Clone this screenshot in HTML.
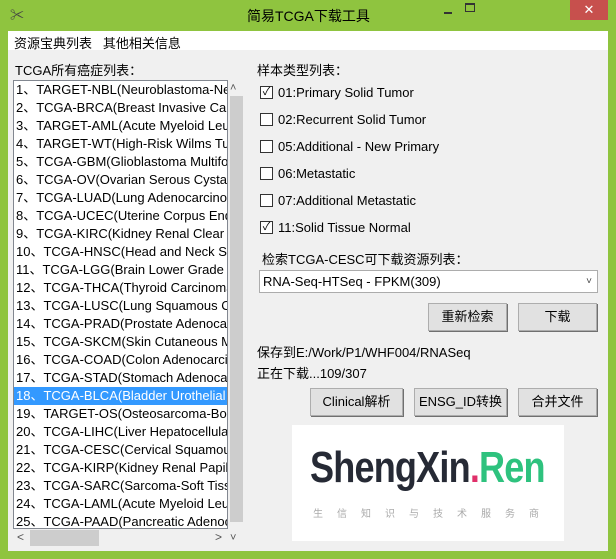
<!DOCTYPE html>
<html><head><meta charset="utf-8"><style>
*{margin:0;padding:0;box-sizing:border-box}
body{width:616px;height:559px;background:#8fc43f;position:relative;overflow:hidden;font-family:"Liberation Sans","Noto Sans CJK SC",sans-serif;font-size:13px;color:#000}
.a{position:absolute;white-space:nowrap}
.client{position:absolute;left:8px;top:31px;width:600px;height:520px;background:#f0f0f0}
.menu{position:absolute;left:8px;top:31px;width:600px;height:19px;background:#fff}
.list{position:absolute;left:13px;top:80px;width:215px;height:449px;background:#fff;border:1px solid #828790;overflow:hidden}
.list div{height:18px;line-height:18px;padding-left:2px;font-size:13px;white-space:nowrap}
.sel{background:#3399ff;color:#fff}
.cb{position:absolute;width:13px;height:13px;border:1px solid #333;background:#fff;font-size:11px;line-height:11px;text-align:center}
.btn{position:absolute;background:#e1e1e1;border:1px solid #adadad;box-shadow:1px 1px 0 #707070;text-align:center;line-height:26px;height:28px}
</style></head><body>
<div class="a" style="left:10px;top:5px;font-size:14px;color:#444">&#x2702;</div>
<div class="a" style="left:247px;top:6px;font-size:14px">简易TCGA下载工具</div>
<div class="a" style="left:444px;top:5px;width:8px;height:2px;background:#333;top:12px"></div>
<div class="a" style="left:465px;top:3px;width:10px;height:9px;border:1px solid #333;border-top-width:2px"></div>
<div class="a" style="left:570px;top:0;width:38px;height:20px;background:#c7504d;color:#fff;text-align:center;font-size:13px;line-height:19px">✕</div>
<div class="client"></div>
<div class="menu"></div>
<div class="a" style="left:14px;top:33px">资源宝典列表&nbsp;&nbsp;&nbsp;其他相关信息</div>
<div class="a" style="left:15px;top:60px">TCGA所有癌症列表：</div>
<div class="list">
<div>1、TARGET-NBL(Neuroblastoma-Ne</div>
<div>2、TCGA-BRCA(Breast Invasive Carc</div>
<div>3、TARGET-AML(Acute Myeloid Leuk</div>
<div>4、TARGET-WT(High-Risk Wilms Tur</div>
<div>5、TCGA-GBM(Glioblastoma Multifo</div>
<div>6、TCGA-OV(Ovarian Serous Cystad</div>
<div>7、TCGA-LUAD(Lung Adenocarcinom</div>
<div>8、TCGA-UCEC(Uterine Corpus Endo</div>
<div>9、TCGA-KIRC(Kidney Renal Clear C</div>
<div>10、TCGA-HNSC(Head and Neck Sq</div>
<div>11、TCGA-LGG(Brain Lower Grade G</div>
<div>12、TCGA-THCA(Thyroid Carcinoma</div>
<div>13、TCGA-LUSC(Lung Squamous Ce</div>
<div>14、TCGA-PRAD(Prostate Adenocarc</div>
<div>15、TCGA-SKCM(Skin Cutaneous Me</div>
<div>16、TCGA-COAD(Colon Adenocarcin</div>
<div>17、TCGA-STAD(Stomach Adenocarc</div>
<div class="sel">18、TCGA-BLCA(Bladder Urothelial C</div>
<div>19、TARGET-OS(Osteosarcoma-Bon</div>
<div>20、TCGA-LIHC(Liver Hepatocellular</div>
<div>21、TCGA-CESC(Cervical Squamous</div>
<div>22、TCGA-KIRP(Kidney Renal Papilla</div>
<div>23、TCGA-SARC(Sarcoma-Soft Tissu</div>
<div>24、TCGA-LAML(Acute Myeloid Leuk</div>
<div>25、TCGA-PAAD(Pancreatic Adenoca</div>
</div>
<div class="a" style="left:228px;top:80px;width:16px;height:449px;background:#f0f0f0"></div>
<div class="a" style="left:230px;top:82px;font-size:11px;color:#555">&#x2C4;</div>
<div class="a" style="left:230px;top:96px;width:13px;height:426px;background:#cdcdcd"></div>
<div class="a" style="left:230px;top:532px;font-size:11px;color:#555">&#x2C5;</div>
<div class="a" style="left:13px;top:529px;width:215px;height:18px;background:#f0f0f0"></div>
<div class="a" style="left:17px;top:530px;font-size:12px;color:#555">&lt;</div>
<div class="a" style="left:30px;top:530px;width:69px;height:16px;background:#cdcdcd"></div>
<div class="a" style="left:215px;top:530px;font-size:12px;color:#555">&gt;</div>

<div class="a" style="left:257px;top:60px">样本类型列表：</div>
<div class="cb" style="left:260px;top:86px">✓</div><div class="a" style="left:278px;top:85px">01:Primary Solid Tumor</div>
<div class="cb" style="left:260px;top:113px"></div><div class="a" style="left:278px;top:112px">02:Recurrent Solid Tumor</div>
<div class="cb" style="left:260px;top:140px"></div><div class="a" style="left:278px;top:139px">05:Additional - New Primary</div>
<div class="cb" style="left:260px;top:167px"></div><div class="a" style="left:278px;top:166px">06:Metastatic</div>
<div class="cb" style="left:260px;top:194px"></div><div class="a" style="left:278px;top:193px">07:Additional Metastatic</div>
<div class="cb" style="left:260px;top:221px">✓</div><div class="a" style="left:278px;top:220px">11:Solid Tissue Normal</div>

<div class="a" style="left:262px;top:249px">检索TCGA-CESC可下载资源列表：</div>
<div class="a" style="left:259px;top:270px;width:339px;height:23px;background:#fff;border:1px solid #acacac;padding-left:3px;line-height:21px">RNA-Seq-HTSeq - FPKM(309)<span style="position:absolute;right:5px;font-size:10px;color:#444">&#x2C5;</span></div>
<div class="btn" style="left:428px;top:303px;width:79px">重新检索</div>
<div class="btn" style="left:518px;top:303px;width:79px">下载</div>
<div class="a" style="left:257px;top:342px">保存到E:/Work/P1/WHF004/RNASeq</div>
<div class="a" style="left:257px;top:363px">正在下载...109/307</div>
<div class="btn" style="left:310px;top:388px;width:93px">Clinical解析</div>
<div class="btn" style="left:414px;top:388px;width:93px">ENSG_ID转换</div>
<div class="btn" style="left:518px;top:388px;width:79px">合并文件</div>

<div class="a" style="left:292px;top:425px;width:272px;height:116px;background:#fff"></div>
<div class="a" style="left:310px;top:443px;font-size:44px;font-weight:bold;color:#262a35;letter-spacing:-1px;transform:scaleX(0.82);transform-origin:left">ShengXin<span style="color:#e0306a">.</span><span style="color:#2ec27e">Ren</span></div>
<div class="a" style="left:313px;top:505px;font-size:10px;color:#aaa;letter-spacing:14px">生信知识与技术服务商</div>
</body></html>
